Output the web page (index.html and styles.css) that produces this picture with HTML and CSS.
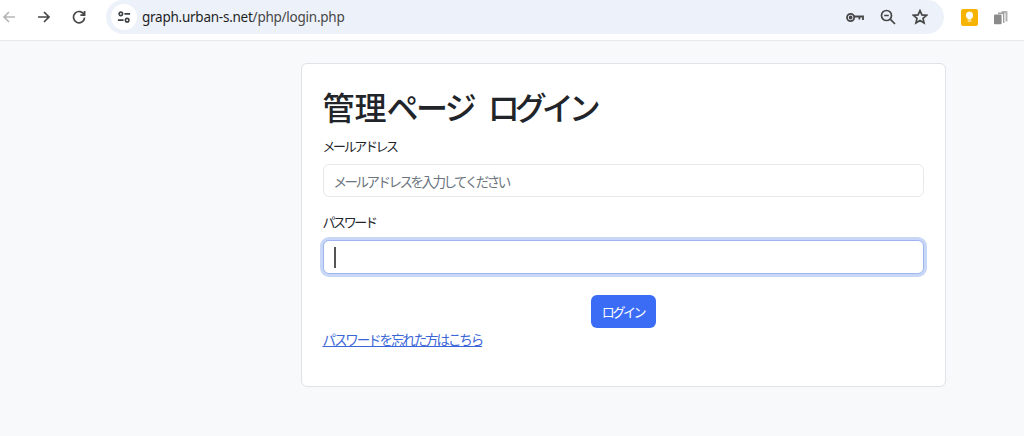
FILE: index.html
```html
<!DOCTYPE html>
<html lang="ja">
<head>
<meta charset="utf-8">
<title>管理ページ ログイン</title>
<link rel="stylesheet" href="styles.css">
</head>
<body>
<header class="toolbar">
  <div class="nav">
    <svg class="nav-icon back" viewBox="0 0 16 16"><path d="M14 8H3M8 3 3 8l5 5"/></svg>
    <svg class="nav-icon" viewBox="0 0 16 16"><path d="M2 8h11M8 3l5 5-5 5"/></svg>
    <svg class="nav-icon" viewBox="0 0 16 16"><path d="M13.2 6A5.6 5.6 0 1 0 13.6 8.6M13.6 2v4.2H9.4"/></svg>
  </div>
  <div class="omnibox">
    <div class="site-chip">
      <svg class="chip-icon" viewBox="0 0 16 16"><circle cx="4.4" cy="4.4" r="2"/><path d="M8.5 4.4H15M1 11.6h6.5"/><circle cx="11.6" cy="11.6" r="2"/></svg>
    </div>
    <span class="url">graph.urban-s.net<span class="url-path">/php/login.php</span></span>
    <div class="omni-actions">
      <svg class="key" viewBox="0 0 18 10"><circle cx="4.6" cy="5" r="3.6"/><circle cx="4.6" cy="5" r="1"/><path d="M8 4h9v3.6M13.4 4v3"/></svg>
      <svg class="omni-icon" viewBox="0 0 16 16"><circle cx="6.5" cy="6.5" r="5"/><path d="M10.2 10.2 15 15M4.2 6.5h4.6"/></svg>
      <svg class="omni-icon" viewBox="0 0 16 16"><path d="M8 1.6l1.9 4.3 4.7.4-3.6 3.1 1.1 4.6L8 11.6 3.9 14l1.1-4.6-3.6-3.1 4.7-.4z"/></svg>
    </div>
  </div>
  <div class="extensions">
    <div class="ext-keep"><svg viewBox="0 0 10 13"><path d="M5 0.5a4 4 0 0 0-2.2 7.4V9.4h4.4V7.9A4 4 0 0 0 5 0.5zM3 10.4h4V11.6H3z"/></svg></div>
    <svg class="ext-copy" viewBox="0 0 15 15"><path d="M8.5 1h5a1 1 0 0 1 1 1v9.5h-2V4a1 1 0 0 0-1-1H8.5z" opacity=".65"/><path d="M5 2.4h5.4a1 1 0 0 1 1 1v9.6H10V5a1 1 0 0 0-1-1H5z" opacity=".8"/><rect x="1" y="4.6" width="7.6" height="9.6" rx="1"/></svg>
  </div>
</header>
<main class="page">
  <form class="card">
    <h1 class="title"><span class="title-kanji">管理</span>ページ <span class="title-word">ログイン</span></h1>
    <div class="field">
      <label class="label" for="email">メールアドレス</label>
      <input class="input" id="email" type="text" placeholder="メールアドレスを入力してください">
    </div>
    <div class="field">
      <label class="label" for="password">パスワード</label>
      <div class="input focused"><span class="caret"></span></div>
    </div>
    <div class="actions"><button class="btn" type="button">ログイン</button></div>
    <a class="forgot" href="#">パスワードを忘れた方はこちら</a>
  </form>
</main>
</body>
</html>
```
FILE: styles.css
```css
* { box-sizing: border-box; }
html, body { margin: 0; height: 100%; }
body {
  width: 1024px;
  height: 436px;
  overflow: hidden;
  background: #f8f9fb;
  font-family: "Noto Sans CJK JP", "Noto Sans", sans-serif;
  color: #212529;
  display: flex;
  flex-direction: column;
}
.toolbar {
  height: 41px;
  flex: none;
  background: #fff;
  border-bottom: 1px solid #e6e8ea;
  display: flex;
  align-items: center;
  padding-bottom: 6px;
}
.nav { display: flex; align-items: center; gap: 19px; padding-left: 1px; width: 106px; }
.nav-icon { width: 16px; height: 16px; fill: none; stroke: #474747; stroke-width: 1.7; }
.nav-icon.back { stroke: #b4b6b8; }
.omnibox {
  width: 838px;
  height: 34px;
  background: #edf2fa;
  border-radius: 17px;
  display: flex;
  align-items: center;
  padding-left: 5px;
  padding-right: 16px;
}
.site-chip {
  width: 26px;
  height: 26px;
  background: #fff;
  border-radius: 50%;
  display: flex;
  align-items: center;
  justify-content: center;
  margin-right: 5px;
  flex: none;
}
.chip-icon { width: 14px; height: 14px; fill: none; stroke: #3c4043; stroke-width: 1.8; }
.url {
  font-family: "Noto Sans", sans-serif;
  font-size: 13.5px;
  letter-spacing: -0.25px;
  color: #1f1f1f;
  white-space: nowrap;
}
.url-path { color: #474747; }
.omni-actions { margin-left: auto; display: flex; align-items: center; gap: 16px; }
.key { width: 18px; height: 11px; fill: none; stroke: #474747; stroke-width: 1.8; margin-left: 1px; }
.omni-icon { width: 16px; height: 16px; fill: none; stroke: #474747; stroke-width: 1.7; }
.extensions { display: flex; align-items: center; gap: 15px; margin-left: 17px; }
.ext-keep {
  width: 17px;
  height: 17px;
  background: #f6b400;
  border-radius: 2px;
  display: flex;
  align-items: center;
  justify-content: center;
}
.ext-keep svg { width: 9px; height: 12px; fill: #fff; }
.ext-copy { width: 15px; height: 15px; fill: #8a8a8a; }
.page { flex: 1; display: flex; flex-direction: column; align-items: center; padding: 22px 0 0 222px; }
.card {
  width: 645px;
  height: 324px;
  background: #fff;
  border: 1px solid #dfe2e6;
  border-radius: 6px;
  padding: 17px 21px 0;
  display: flex;
  flex-direction: column;
}
.title {
  margin: 0 0 6px 0;
  font-size: 32px;
  line-height: 50px;
  font-weight: 500;
  letter-spacing: -2.6px;
  word-spacing: 9px;
  color: #212529;
}
.title-kanji { letter-spacing: 0; }
.title-word { letter-spacing: -5px; }
.field { display: flex; flex-direction: column; margin-bottom: 16px; }
.label {
  font-size: 13px;
  line-height: 17px;
  letter-spacing: -2.4px;
  margin-bottom: 10px;
  color: #212529;
}
.input {
  width: 601px;
  height: 33px;
  border: 1px solid #e6e8ec;
  border-radius: 6px;
  padding: 0 10px;
  background: #fff;
  font-family: inherit;
  font-size: 13.5px;
  letter-spacing: -2.5px;
  display: flex;
  align-items: center;
  outline: none;
}
.input::placeholder { color: #6c757d; opacity: 1; }
.focused {
  border-color: #9db6f0;
  box-shadow: 0 0 0 3px #c9d7f6;
  height: 34px;
}
.caret { width: 2px; height: 21px; background: #555; }
.actions { display: flex; justify-content: center; margin-top: 5px; }
.btn {
  width: 65px;
  height: 33px;
  background: #3a6cf6;
  color: #fff;
  border: 0;
  border-radius: 6px;
  font-family: inherit;
  font-size: 13px;
  letter-spacing: -2.4px;
  padding: 0;
}
.forgot {
  margin-top: 3px;
  font-size: 13.5px;
  line-height: 17px;
  letter-spacing: -2.1px;
  color: #3a66d8;
  align-self: flex-start;
}
```
